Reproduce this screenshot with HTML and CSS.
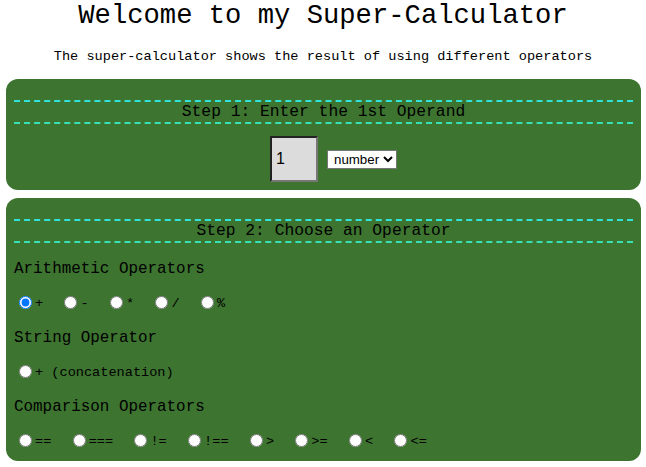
FILE: index.html
```html
<!DOCTYPE html>
<html>
<head>
<meta charset="utf-8">
<link rel="stylesheet" href="styles.css">
</head>
<body>
<h1 class="title">Welcome to my Super-Calculator</h1>
<p class="intro">The super-calculator shows the result of using different operators</p>

<section class="panel panel-one">
  <div class="step">Step 1: Enter the 1st Operand</div>
  <div class="operand-row">
    <input class="operand" type="text" value="1">
    <select class="kind"><option>number</option></select>
  </div>
</section>

<section class="panel panel-two">
  <div class="step">Step 2: Choose an Operator</div>
  <h3 class="group group-first">Arithmetic Operators</h3>
  <div class="opts">
    <label class="opt"><input type="radio" name="op" checked><span class="sym">+  </span></label>
    <label class="opt"><input type="radio" name="op"><span class="sym">-  </span></label>
    <label class="opt"><input type="radio" name="op"><span class="sym">*  </span></label>
    <label class="opt"><input type="radio" name="op"><span class="sym">/  </span></label>
    <label class="opt"><input type="radio" name="op"><span class="sym">%</span></label>
  </div>
  <h3 class="group">String Operator</h3>
  <div class="opts">
    <label class="opt"><input type="radio" name="op"><span class="sym">+ (concatenation)</span></label>
  </div>
  <h3 class="group">Comparison Operators</h3>
  <div class="opts">
    <label class="opt"><input type="radio" name="op"><span class="sym">==  </span></label>
    <label class="opt"><input type="radio" name="op"><span class="sym">===  </span></label>
    <label class="opt"><input type="radio" name="op"><span class="sym">!=  </span></label>
    <label class="opt"><input type="radio" name="op"><span class="sym">!==  </span></label>
    <label class="opt"><input type="radio" name="op"><span class="sym">&gt;  </span></label>
    <label class="opt"><input type="radio" name="op"><span class="sym">&gt;=  </span></label>
    <label class="opt"><input type="radio" name="op"><span class="sym">&lt;  </span></label>
    <label class="opt"><input type="radio" name="op"><span class="sym">&lt;=</span></label>
  </div>
</section>
</body>
</html>
```

FILE: styles.css
```css
html, body {
  margin: 0;
  padding: 0;
  background: #ffffff;
}

body {
  font-family: "Liberation Mono", "DejaVu Sans Mono", monospace;
  font-size: 13.6px;
  color: #000000;
}

.title {
  margin: 0;
  padding-top: 2px;
  font-size: 27.2px;
  font-weight: normal;
  line-height: 28px;
  text-align: center;
}

.intro {
  margin: 0;
  padding-top: 19px;
  padding-bottom: 14px;
  line-height: 16px;
  text-align: center;
}

.panel {
  margin: 0 5px 8px 6px;
  padding: 21px 8px 8px 8px;
  background: #3d7430;
  border-radius: 12px;
}

.panel-two {
  padding-bottom: 12px;
}

.step {
  margin: 0;
  border-top: 2px dashed #30e2da;
  border-bottom: 2px dashed #38e0b6;
  font-size: 16.3px;
  line-height: 20px;
  text-align: center;
}

.operand-row {
  display: flex;
  justify-content: center;
  align-items: center;
  gap: 9px;
  padding-left: 20px;
  margin-top: 12px;
}

.operand {
  box-sizing: border-box;
  width: 48px;
  height: 46px;
  margin: 0;
  padding: 0 0 0 4px;
  background: #dcdcdc;
  border: 2px solid;
  border-color: #222222 #777777 #777777 #222222;
  font-family: "Liberation Sans", Arial, sans-serif;
  font-size: 16px;
  color: #000000;
}

.kind {
  box-sizing: border-box;
  width: 70px;
  height: 19px;
  margin: 0;
  padding: 0 0 0 2px;
  background: #ffffff;
  border: 1px solid #767676;
  border-radius: 0;
  font-family: "Liberation Sans", Arial, sans-serif;
  font-size: 13.3px;
  color: #000000;
}

.group {
  margin: 18px 0 0 0;
  font-size: 15.9px;
  font-weight: normal;
  line-height: 18px;
}

.group-first {
  margin-top: 17px;
}

.opts {
  display: flex;
  align-items: center;
  margin-top: 15px;
  height: 18px;
}

.opt {
  display: flex;
  align-items: center;
}

.opt input {
  width: 13px;
  height: 13px;
  margin: 0 3px 0 5px;
  accent-color: #0075ff;
}

.sym {
  white-space: pre;
  font-size: 13.6px;
  line-height: 16px;
  padding-top: 3px;
}
```
